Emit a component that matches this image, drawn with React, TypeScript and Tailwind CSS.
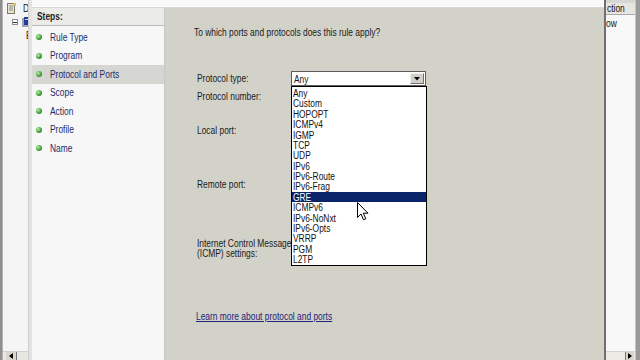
import React from "react";

const S = ({ children, className = "" }: { children: React.ReactNode; className?: string }) => (
  <span className={`inline-block origin-left scale-x-[0.765] whitespace-nowrap ${className}`}>{children}</span>
);

const L = ({ children }: { children: React.ReactNode }) => (
  <span className="inline-block origin-left scale-x-[0.84] translate-y-[1px] whitespace-nowrap">{children}</span>
);

const steps = ["Rule Type", "Program", "Protocol and Ports", "Scope", "Action", "Profile", "Name"];
const protocols = [
  "Any",
  "Custom",
  "HOPOPT",
  "ICMPv4",
  "IGMP",
  "TCP",
  "UDP",
  "IPv6",
  "IPv6-Route",
  "IPv6-Frag",
  "GRE",
  "ICMPv6",
  "IPv6-NoNxt",
  "IPv6-Opts",
  "VRRP",
  "PGM",
  "L2TP",
];

export default function App() {
  return (
    <div className="w-[640px] h-[360px] flex overflow-hidden bg-[#d3d2c9] font-['Liberation_Sans',Arial,sans-serif] text-[11px] leading-[13px] text-[#1a1a1a]">
      {/* Left MMC tree strip */}
      <div className="w-[32px] h-full flex shrink-0">
        <div className="w-[3px] bg-[#8e8e8e] border-r border-[#b4b4b4]"></div>
        <div className="w-[25px] bg-[#f5f5f5] flex flex-col overflow-hidden">
          <div className="flex items-center h-[12px] mt-[2px]">
            <svg className="ml-[4px] shrink-0" width="9" height="11" viewBox="0 0 9 11">
              <rect x="0.5" y="0.5" width="7" height="10" fill="#e8e4d0" stroke="#7a7a6a" />
              <line x1="2" y1="3" x2="6" y2="3" stroke="#8a8a8a" />
              <line x1="2" y1="5" x2="6" y2="5" stroke="#8a8a8a" />
              <line x1="2" y1="7" x2="6" y2="7" stroke="#8a8a8a" />
              <rect x="6" y="0" width="3" height="3" fill="#d8c060" />
            </svg>
            <S className="ml-[7px] text-[#111]">D</S>
          </div>
          <div className="flex items-center h-[10px] mt-[3px]">
            <div className="ml-[9px] w-[6px] h-[6px] border border-[#8a8a8a] bg-white flex items-center justify-center shrink-0">
              <div className="w-[4px] h-[1px] bg-[#333]"></div>
            </div>
            <svg className="ml-[4px] shrink-0" width="8" height="10" viewBox="0 0 8 10">
              <rect x="0" y="1" width="6" height="9" fill="#9aa4b4" />
              <rect x="2" y="0" width="5" height="8" fill="#2a3a9a" />
              <rect x="3" y="2" width="3" height="1" fill="#c8d0ff" />
            </svg>
          </div>
          <div className="flex items-center h-[12px] mt-[2px]">
            <S className="ml-[23px] text-[#111]">E</S>
          </div>
          <div className="flex-1"></div>
          <div className="h-[9px] bg-[#e8e7e2] border-t border-[#d0d0d0] flex items-center">
            <div className="ml-[3px] w-[11px] h-[8px] bg-[#d8d6ce] border-r border-[#777] flex items-center justify-center">
              <svg width="4" height="6" viewBox="0 0 4 6">
                <polygon points="4,0 0,3 4,6" fill="#000" />
              </svg>
            </div>
          </div>
        </div>
        <div className="w-[4px] bg-[#e3e3e3] border-l border-[#cdcdcd]"></div>
      </div>

      {/* Dialog */}
      <div className="flex-1 flex flex-col min-w-0">
        <div className="h-[8px] bg-[#fafafa] border-b border-[#d8d8d8] shrink-0"></div>
        <div className="flex-1 flex min-h-0">
          {/* Steps panel */}
          <div className="w-[133px] h-full bg-[#f7f7f7] border-r border-[#c9c9c9] flex flex-col shrink-0">
            <div className="h-[18px] bg-[#ebebe8] border-b border-[#bcbcbc] flex items-center pl-[5px]">
              <S className="font-bold text-[#222]">Steps:</S>
            </div>
            <div className="mt-[2px] flex flex-col">
              {steps.map((s, i) => (
                <div
                  key={s}
                  className={`h-[18.5px] flex items-center ${i === 2 ? "bg-[#d6d6d2]" : ""}`}
                >
                  <div className="ml-[4px] w-[6px] h-[6px] rounded-full bg-[radial-gradient(circle_at_35%_35%,#b8eca8,#3a9a34_60%,#2a6a24)] shrink-0"></div>
                  <S className="ml-[8px] text-[#1e2c6c]">{s}</S>
                </div>
              ))}
            </div>
          </div>

          {/* Main panel */}
          <div className="flex-1 h-full flex flex-col pl-[29px] pt-[18px] min-w-0">
            <div className="h-[13px]">
              <S>To which ports and protocols does this rule apply?</S>
            </div>
            <div className="ml-[3px] mt-[32px] flex flex-col">
              <div className="flex items-center h-[15px]">
                <div className="w-[94px]">
                  <S>Protocol type:</S>
                </div>
                <div className="relative w-[135px] h-[15px]">
                  <div className="w-full h-full border border-[#5e5e5e] bg-white flex items-center">
                    <div className="flex-1 pl-[2px] text-[10px] leading-[12px]">
                      <L>Any</L>
                    </div>
                    <div className="w-[14px] h-[11px] mr-[1px] bg-[#d4d0c8] border border-t-[#f4f4f4] border-l-[#f4f4f4] border-r-[#707070] border-b-[#707070] flex items-center justify-center">
                      <svg width="6" height="4" viewBox="0 0 6 4">
                        <polygon points="0,0 6,0 3,3.5" fill="#000" />
                      </svg>
                    </div>
                  </div>
                  {/* Dropdown list overlay */}
                  <div className="absolute left-0 top-[15px] w-[136px] h-[180px] border border-black bg-white pt-[1px] z-10">
                    {protocols.map((p) => (
                      <div
                        key={p}
                        className={`h-[10.375px] leading-[10.375px] text-[10px] pl-[1px] ${
                          p === "GRE" ? "bg-[#0a246a] text-white" : "text-[#111]"
                        }`}
                      >
                        <L>{p}</L>
                      </div>
                    ))}
                    <svg
                      className="absolute left-[65px] top-[115px]"
                      width="12"
                      height="19"
                      viewBox="0 0 12 19"
                    >
                      <path
                        d="M0.5,0.5 L0.5,15.5 L4,12 L6.5,17.8 L8.8,16.8 L6.3,11.2 L11,11.2 Z"
                        fill="#fff"
                        stroke="#000"
                        strokeWidth="1"
                        strokeLinejoin="miter"
                      />
                    </svg>
                  </div>
                </div>
              </div>
              <div className="mt-[4px] h-[13px]">
                <S>Protocol number:</S>
              </div>
              <div className="mt-[21px] h-[13px]">
                <S>Local port:</S>
              </div>
              <div className="mt-[41px] h-[13px]">
                <S>Remote port:</S>
              </div>
              <div className="mt-[47px] flex flex-col leading-[10px]">
                <S>Internet Control Message</S>
                <S>(ICMP) settings:</S>
              </div>
              <div className="mt-[52px] -ml-[1px] h-[13px]">
                <S className="underline text-[#23237a]">Learn more about protocol and ports</S>
              </div>
            </div>
          </div>
        </div>
      </div>

      {/* Right strip (background window) */}
      <div className="w-[36px] h-full flex shrink-0">
        <div className="w-[2px] bg-[#6f6f6f]"></div>
        <div className="w-[29px] bg-[#f8f8f8] flex flex-col overflow-hidden">
          <div className="h-[3px] bg-[#d6d6d2]"></div>
          <div className="h-[12px] bg-[#e6e5e0] border-b border-[#a8a8a8] flex items-center pl-[1px]">
            <S className="text-[#111]">ction</S>
          </div>
          <div className="mt-[2px] h-[13px]">
            <S className="text-[#111]">ow</S>
          </div>
          <div className="flex-1"></div>
          <div className="h-[9px] bg-[#ebeae5] border-t border-[#d4d4d4] flex items-center justify-end">
            <div className="mr-[1px] w-[9px] h-[8px] bg-[#d8d6ce] border-l border-[#777] flex items-center justify-center">
              <svg width="4" height="6" viewBox="0 0 4 6">
                <polygon points="0,0 4,3 0,6" fill="#000" />
              </svg>
            </div>
          </div>
        </div>
        <div className="w-[5px] bg-[#9a9a9a] border-l border-[#c4c4c4]"></div>
      </div>
    </div>
  );
}
